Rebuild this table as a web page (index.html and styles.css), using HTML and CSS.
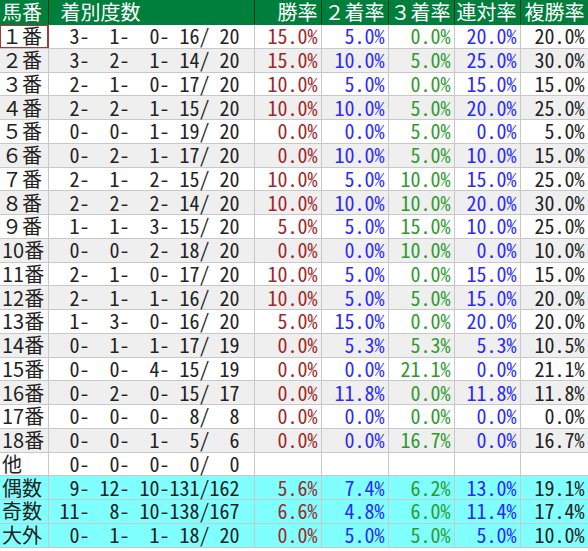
FILE: index.html
```html
<!DOCTYPE html>
<html lang="ja">
<head>
<meta charset="utf-8">
<link rel="stylesheet" href="styles.css">
</head>
<body>
<table class="stats">
<colgroup>
<col class="c-no"><col class="c-cnt"><col class="c-p"><col class="c-p"><col class="c-p3"><col class="c-p3"><col class="c-p6">
</colgroup>
<thead>
<tr><th class="no">馬番</th><th class="cnt">着別度数</th><th>勝率</th><th>２着率</th><th>３着率</th><th>連対率</th><th>複勝率</th></tr>
</thead>
<tbody>
<tr><td class="no sel">１番</td><td class="cnt">  3-  1-  0- 16/ 20</td><td class="r1">15.0%</td><td class="r2">5.0%</td><td class="r3">0.0%</td><td class="r4">20.0%</td><td class="r5">20.0%</td></tr>
<tr class="alt"><td class="no">２番</td><td class="cnt">  3-  2-  1- 14/ 20</td><td class="r1">15.0%</td><td class="r2">10.0%</td><td class="r3">5.0%</td><td class="r4">25.0%</td><td class="r5">30.0%</td></tr>
<tr><td class="no">３番</td><td class="cnt">  2-  1-  0- 17/ 20</td><td class="r1">10.0%</td><td class="r2">5.0%</td><td class="r3">0.0%</td><td class="r4">15.0%</td><td class="r5">15.0%</td></tr>
<tr class="alt"><td class="no">４番</td><td class="cnt">  2-  2-  1- 15/ 20</td><td class="r1">10.0%</td><td class="r2">10.0%</td><td class="r3">5.0%</td><td class="r4">20.0%</td><td class="r5">25.0%</td></tr>
<tr><td class="no">５番</td><td class="cnt">  0-  0-  1- 19/ 20</td><td class="r1">0.0%</td><td class="r2">0.0%</td><td class="r3">5.0%</td><td class="r4">0.0%</td><td class="r5">5.0%</td></tr>
<tr class="alt"><td class="no">６番</td><td class="cnt">  0-  2-  1- 17/ 20</td><td class="r1">0.0%</td><td class="r2">10.0%</td><td class="r3">5.0%</td><td class="r4">10.0%</td><td class="r5">15.0%</td></tr>
<tr><td class="no">７番</td><td class="cnt">  2-  1-  2- 15/ 20</td><td class="r1">10.0%</td><td class="r2">5.0%</td><td class="r3">10.0%</td><td class="r4">15.0%</td><td class="r5">25.0%</td></tr>
<tr class="alt"><td class="no">８番</td><td class="cnt">  2-  2-  2- 14/ 20</td><td class="r1">10.0%</td><td class="r2">10.0%</td><td class="r3">10.0%</td><td class="r4">20.0%</td><td class="r5">30.0%</td></tr>
<tr><td class="no">９番</td><td class="cnt">  1-  1-  3- 15/ 20</td><td class="r1">5.0%</td><td class="r2">5.0%</td><td class="r3">15.0%</td><td class="r4">10.0%</td><td class="r5">25.0%</td></tr>
<tr class="alt"><td class="no">10番</td><td class="cnt">  0-  0-  2- 18/ 20</td><td class="r1">0.0%</td><td class="r2">0.0%</td><td class="r3">10.0%</td><td class="r4">0.0%</td><td class="r5">10.0%</td></tr>
<tr><td class="no">11番</td><td class="cnt">  2-  1-  0- 17/ 20</td><td class="r1">10.0%</td><td class="r2">5.0%</td><td class="r3">0.0%</td><td class="r4">15.0%</td><td class="r5">15.0%</td></tr>
<tr class="alt"><td class="no">12番</td><td class="cnt">  2-  1-  1- 16/ 20</td><td class="r1">10.0%</td><td class="r2">5.0%</td><td class="r3">5.0%</td><td class="r4">15.0%</td><td class="r5">20.0%</td></tr>
<tr><td class="no">13番</td><td class="cnt">  1-  3-  0- 16/ 20</td><td class="r1">5.0%</td><td class="r2">15.0%</td><td class="r3">0.0%</td><td class="r4">20.0%</td><td class="r5">20.0%</td></tr>
<tr class="alt"><td class="no">14番</td><td class="cnt">  0-  1-  1- 17/ 19</td><td class="r1">0.0%</td><td class="r2">5.3%</td><td class="r3">5.3%</td><td class="r4">5.3%</td><td class="r5">10.5%</td></tr>
<tr><td class="no">15番</td><td class="cnt">  0-  0-  4- 15/ 19</td><td class="r1">0.0%</td><td class="r2">0.0%</td><td class="r3">21.1%</td><td class="r4">0.0%</td><td class="r5">21.1%</td></tr>
<tr class="alt"><td class="no">16番</td><td class="cnt">  0-  2-  0- 15/ 17</td><td class="r1">0.0%</td><td class="r2">11.8%</td><td class="r3">0.0%</td><td class="r4">11.8%</td><td class="r5">11.8%</td></tr>
<tr><td class="no">17番</td><td class="cnt">  0-  0-  0-  8/  8</td><td class="r1">0.0%</td><td class="r2">0.0%</td><td class="r3">0.0%</td><td class="r4">0.0%</td><td class="r5">0.0%</td></tr>
<tr class="alt"><td class="no">18番</td><td class="cnt">  0-  0-  1-  5/  6</td><td class="r1">0.0%</td><td class="r2">0.0%</td><td class="r3">16.7%</td><td class="r4">0.0%</td><td class="r5">16.7%</td></tr>
<tr><td class="no">他</td><td class="cnt">  0-  0-  0-  0/  0</td><td class="r1"></td><td class="r2"></td><td class="r3"></td><td class="r4"></td><td class="r5"></td></tr>
<tr class="sum"><td class="no">偶数</td><td class="cnt">  9- 12- 10-131/162</td><td class="r1">5.6%</td><td class="r2">7.4%</td><td class="r3">6.2%</td><td class="r4">13.0%</td><td class="r5">19.1%</td></tr>
<tr class="sum"><td class="no">奇数</td><td class="cnt"> 11-  8- 10-138/167</td><td class="r1">6.6%</td><td class="r2">4.8%</td><td class="r3">6.0%</td><td class="r4">11.4%</td><td class="r5">17.4%</td></tr>
<tr class="sum"><td class="no">大外</td><td class="cnt">  0-  1-  1- 18/ 20</td><td class="r1">0.0%</td><td class="r2">5.0%</td><td class="r3">5.0%</td><td class="r4">5.0%</td><td class="r5">10.0%</td></tr>
</tbody>
</table>
</body>
</html>
```

FILE: styles.css
```css
html, body {
  margin: 0;
  padding: 0;
  background: #ffffff;
}

.stats {
  border-collapse: collapse;
  table-layout: fixed;
  width: 588px;
  font-family: "Noto Sans CJK JP", sans-serif;
  font-size: 20px;
  line-height: 22px;
  color: #222222;
}

.c-no { width: 48px; }
.c-cnt { width: 206px; }
.c-p { width: 67px; }
.c-p3 { width: 66px; }
.c-p6 { width: 68px; }

.stats th,
.stats td {
  padding: 0 3px 0 0;
  height: 22.75px;
  white-space: pre;
  text-align: right;
  border-right: 1px solid #c8c8c8;
  border-bottom: 1px solid #c8c8c8;
}

.stats td {
  font-feature-settings: "hwid" 1;
}

.stats th {
  height: 24px;
  line-height: 24px;
  background: #007f3c;
  color: #ffffff;
  font-weight: normal;
  border-right: 1px solid #003d1c;
  border-bottom: 1px solid #007f3c;
}

.stats th.no,
.stats td.no {
  text-align: left;
  padding: 0 0 0 2px;
  font-feature-settings: normal;
}

.stats th.cnt {
  text-align: left;
  padding-left: 12px;
}

.stats td.cnt {
  padding-right: 14px;
}

.stats td.sel {
  box-shadow: inset 0 0 0 1px #a83a3a;
  border-right-color: #a83a3a;
}

.alt td {
  background: #efefef;
}

.sum td {
  background: #80ffff;
}

.r1 { color: #a02828; }
.r2 { color: #2a2aff; }
.r3 { color: #2f9a2f; }
.r4 { color: #2a2aff; }
.r5 { color: #222222; }
```
